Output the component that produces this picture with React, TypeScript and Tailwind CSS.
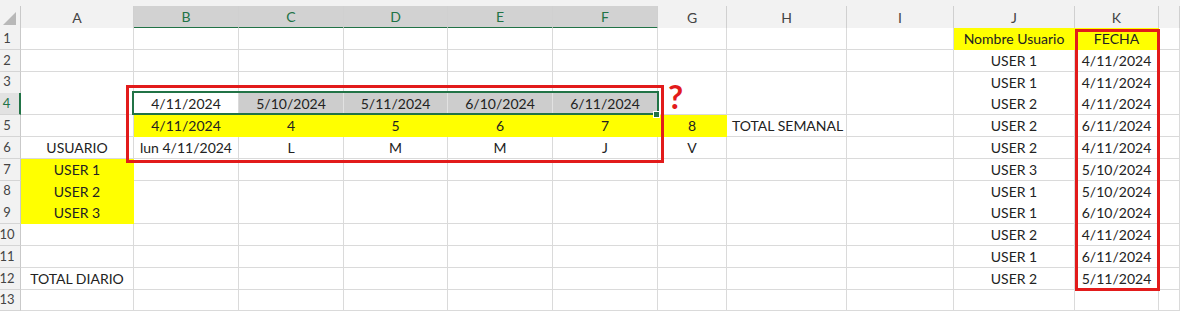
import React from "react";

type Cell = { t?: string; y?: boolean; sel?: boolean; left?: boolean };

const COLS = ["A", "B", "C", "D", "E", "F", "G", "H", "I", "J", "K", ""];
const SELECTED_COLS = ["B", "C", "D", "E", "F"];
const GRID = "grid grid-cols-[21px_113px_105px_105px_104px_105px_105px_69px_120px_107px_121px_84px_1fr]";

// fila -> columna -> celda
const ROWS: Record<string, Cell>[] = [
  { J: { t: "Nombre Usuario", y: true }, K: { t: "FECHA", y: true } },
  { J: { t: "USER 1" }, K: { t: "4/11/2024" } },
  { J: { t: "USER 1" }, K: { t: "4/11/2024" } },
  {
    B: { t: "4/11/2024" },
    C: { t: "5/10/2024", sel: true },
    D: { t: "5/11/2024", sel: true },
    E: { t: "6/10/2024", sel: true },
    F: { t: "6/11/2024", sel: true },
    J: { t: "USER 2" },
    K: { t: "4/11/2024" },
  },
  {
    B: { t: "4/11/2024", y: true },
    C: { t: "4", y: true },
    D: { t: "5", y: true },
    E: { t: "6", y: true },
    F: { t: "7", y: true },
    G: { t: "8", y: true },
    H: { t: "TOTAL SEMANAL", left: true },
    J: { t: "USER 2" },
    K: { t: "6/11/2024" },
  },
  {
    A: { t: "USUARIO" },
    B: { t: "lun 4/11/2024" },
    C: { t: "L" },
    D: { t: "M" },
    E: { t: "M" },
    F: { t: "J" },
    G: { t: "V" },
    J: { t: "USER 2" },
    K: { t: "4/11/2024" },
  },
  { A: { t: "USER 1", y: true }, J: { t: "USER 3" }, K: { t: "5/10/2024" } },
  { A: { t: "USER 2", y: true }, J: { t: "USER 1" }, K: { t: "5/10/2024" } },
  { A: { t: "USER 3", y: true }, J: { t: "USER 1" }, K: { t: "6/10/2024" } },
  { J: { t: "USER 2" }, K: { t: "4/11/2024" } },
  { J: { t: "USER 1" }, K: { t: "6/11/2024" } },
  { A: { t: "TOTAL DIARIO" }, J: { t: "USER 2" }, K: { t: "5/11/2024" } },
  {},
];

function DataCell({ cell }: { cell?: Cell }) {
  let bg = "bg-white border-[#dadada]";
  if (cell?.y) bg = "bg-[#ffff00] border-[#ffff00]";
  else if (cell?.sel) bg = "bg-[#cdcdcd] border-[#e2e2e2]";
  return (
    <div
      className={`flex h-full items-center overflow-visible whitespace-nowrap border-r border-b ${bg} ${
        cell?.left ? "justify-start pl-[5px]" : "justify-center"
      }`}
    >
      {cell?.t}
    </div>
  );
}

export default function App() {
  return (
    <div className="relative h-[314px] w-[1180px] overflow-hidden bg-white font-['Lato','Noto_Sans',sans-serif] text-[14px] text-[#222]">
      {/* cabecera de columnas */}
      <div className="h-[6px] bg-[#f2f2f2]" />
      <div className={`${GRID} h-[22px] bg-[#f2f2f2]`}>
        <div className="flex items-end justify-end border-r border-b border-[#c9c9c9] pb-[3px] pr-[4px]">
          <svg width="13" height="13" viewBox="0 0 13 13">
            <path d="M13 0 L13 13 L0 13 Z" fill="#b8b8b8" />
          </svg>
        </div>
        {COLS.map((c, i) => {
          const sel = SELECTED_COLS.includes(c);
          return (
            <div
              key={i}
              className={`flex items-center justify-center border-r border-[#d0d0d0] ${
                sel
                  ? "border-b-2 border-b-[#217346] bg-[#d2d2d2] text-[#217346]"
                  : "border-b border-b-[#c9c9c9] text-[#444]"
              }`}
            >
              {c}
            </div>
          );
        })}
      </div>

      {/* filas */}
      {ROWS.map((row, r) => (
        <div key={r} className={`${GRID} h-[21.8px]`}>
          <div
            className={`flex items-center justify-center pr-[6px] text-[13px] border-b border-[#d5d5d5] ${
              r === 3
                ? "border-r-2 border-r-[#217346] bg-[#e2e2e2] text-[#217346]"
                : "border-r border-r-[#c9c9c9] bg-[#f2f2f2] text-[#444]"
            }`}
          >
            {r + 1}
          </div>
          {COLS.map((c, i) => (
            <DataCell key={i} cell={row[c]} />
          ))}
        </div>
      ))}

      {/* selección B4:F4 */}
      <div className="pointer-events-none absolute left-[132px] top-[91px] h-[24px] w-[527px] border-2 border-[#217346]" />
      <div className="absolute left-[653px] top-[111px] h-[7px] w-[7px] border border-white bg-[#217346]" />

      {/* marcas rojas */}
      <div className="pointer-events-none absolute left-[126px] top-[85px] h-[78px] w-[538px] border-[3px] border-[#e21b1b]" />
      <div className="pointer-events-none absolute left-[1075px] top-[29px] h-[262px] w-[85px] border-[3px] border-[#e21b1b]" />
      <div className="absolute left-[668px] top-[80px] font-['Lato',sans-serif] text-[33px] font-bold leading-none text-[#e21b1b]">
        ?
      </div>
    </div>
  );
}
